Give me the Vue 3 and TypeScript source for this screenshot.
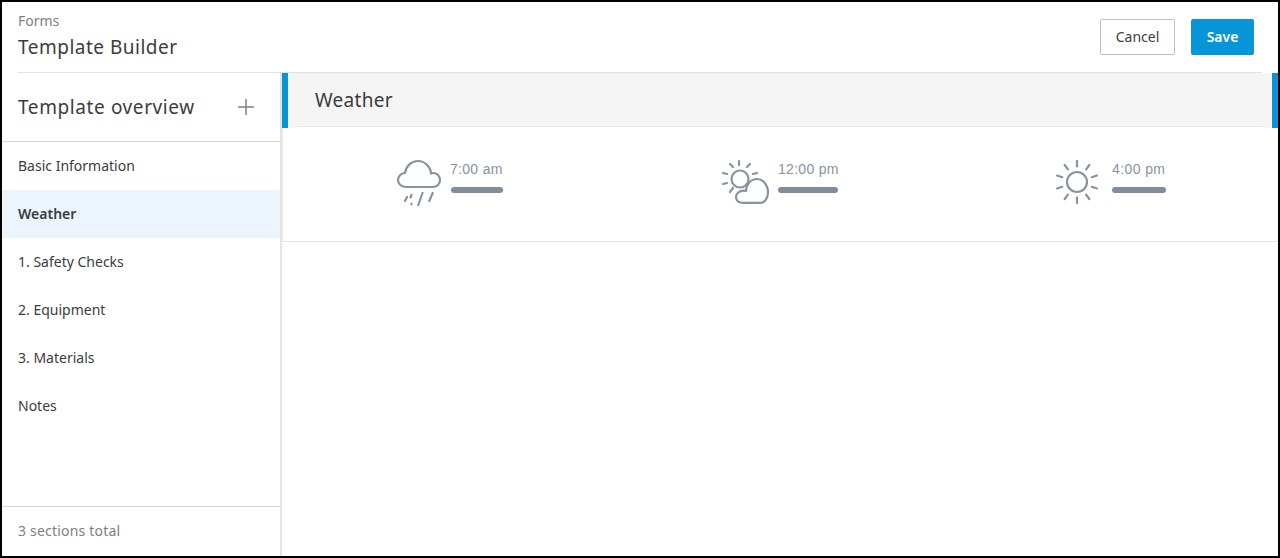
<script setup lang="ts">
const sections = [
  "Basic Information",
  "Weather",
  "1. Safety Checks",
  "2. Equipment",
  "3. Materials",
  "Notes",
];
const rays = [0, 36, 72, 108, 144, 180, 216, 252, 288, 324];
const drops = [
  "M404 201l2-4",
  "M410.500 195l-1 2.500",
  "M410.500 203.500v.8",
  "M421.500 193l-4.200 12",
  "M431.700 193l-3.400 8",
];
</script>

<template>
  <div class="page">
    <header class="top">
      <div class="titles">
        <div class="crumb">Forms</div>
        <div class="title">Template Builder</div>
      </div>
      <div class="actions">
        <button class="btn cancel">Cancel</button>
        <button class="btn save">Save</button>
      </div>
    </header>
    <div class="body">
      <aside class="side">
        <div class="side-head">
          <span class="side-title">Template overview</span>
          <svg class="plus" width="16" height="16" viewBox="0 0 16 16">
            <path d="M8 0v16M0 8h16" stroke="#808080" stroke-width="1.500" fill="none" />
          </svg>
        </div>
        <nav class="nav">
          <div
            v-for="s in sections"
            :key="s"
            class="nav-item"
            :class="{ active: s === 'Weather' }"
          >
            {{ s }}
          </div>
        </nav>
        <div class="side-foot">3 sections total</div>
      </aside>
      <main class="main">
        <div class="section-head">
          <div class="section-title">Weather</div>
        </div>
        <div class="weather">
          <div class="slot slot-a">
            <svg class="icon" width="48" height="50" viewBox="394 156 48 50" fill="none" stroke="#87939f" stroke-width="2.200" stroke-linecap="round" stroke-linejoin="round">
              <path d="M405 187h27c4 0 7-3 7-7s-3-7-6.500-7c-1 0-2 .2-2.500.5-.5-7-6.500-12.500-13-12.500s-12 5-13 12c-4 .3-7 3.500-7 7 0 4 3.500 7 8 7z" />
              <path v-for="d in drops" :key="d" :d="d" />
            </svg>
            <div class="reading">
              <div class="time">7:00 am</div>
              <div class="bar w52"></div>
            </div>
          </div>
          <div class="slot slot-b">
            <svg class="icon" width="48" height="46" viewBox="722 158 48 46" fill="none" stroke="#87939f" stroke-width="2.200" stroke-linecap="round" stroke-linejoin="round">
              <circle cx="740" cy="179" r="8.500" />
              <path d="M743 202.800h17c4.500 0 8-4 8-10.300 0-7.500-5-13.500-11-13.500-6 0-11 5.500-11 12-.8-.3-1.500-.4-2.400-.4-4.300 0-7.600 3-7.600 6.400 0 3.700 3 5.800 7 5.800z" fill="#fff" />
              <path d="M739 161v4M730 164l3 3M750 164l-3 3M723 173l4 1M757 173l-4 1M723 184l4-1M730 192l3-4" />
            </svg>
            <div class="reading">
              <div class="time">12:00 pm</div>
              <div class="bar w60"></div>
            </div>
          </div>
          <div class="slot slot-c">
            <svg class="icon" width="44" height="44" viewBox="-22 -22 44 44" fill="none" stroke="#87939f" stroke-width="2.200" stroke-linecap="round">
              <circle r="10" />
              <path v-for="r in rays" :key="r" d="M0 -21V-15.500" :transform="`rotate(${r})`" />
            </svg>
            <div class="reading">
              <div class="time">4:00 pm</div>
              <div class="bar w54"></div>
            </div>
          </div>
        </div>
      </main>
    </div>
  </div>
</template>

<style>
html,
body {
  margin: 0;
  background: #fff;
}
</style>

<style scoped>
.page {
  box-sizing: border-box;
  width: 1280px;
  height: 558px;
  border: 2px solid #000;
  display: flex;
  flex-direction: column;
  background: #fff;
  font-family: "Noto Sans", sans-serif;
  color: #3c3c3c;
  overflow: hidden;
}

.top {
  flex: none;
  height: 71px;
  margin: 0 16px;
  box-sizing: border-box;
  display: flex;
  justify-content: space-between;
  align-items: flex-start;
  border-bottom: 1px solid #e2e2e2;
}

.crumb {
  margin-top: 11px;
  font-size: 14px;
  line-height: 16px;
  color: #808080;
}

.title {
  margin-top: 5px;
  font-size: 19px;
  line-height: 26px;
  letter-spacing: 0.5px;
}

.actions {
  display: flex;
  gap: 16px;
  margin-top: 17px;
  margin-right: 8px;
}

.btn {
  box-sizing: border-box;
  height: 36px;
  border-radius: 2px;
  font-family: inherit;
  font-size: 14px;
  padding: 0 0 2px;
}

.cancel {
  width: 75px;
  background: #fff;
  border: 1px solid #bfbfbf;
  color: #3c3c3c;
}

.save {
  width: 63px;
  background: #0696d7;
  border: 0;
  color: #fff;
  font-weight: 600;
}

.body {
  flex: 1;
  display: flex;
  min-height: 0;
}

.side {
  flex: none;
  box-sizing: border-box;
  width: 280px;
  border-right: 2px solid #e4e4e4;
  display: flex;
  flex-direction: column;
}

.side-head {
  flex: none;
  height: 69px;
  box-sizing: border-box;
  padding: 0 24px 0 16px;
  display: flex;
  align-items: center;
  justify-content: space-between;
  border-bottom: 1px solid #d9d9d9;
}

.side-title {
  font-size: 19px;
  letter-spacing: 0.6px;
  color: #3c3c3c;
}

.plus {
  margin-right: 2px;
}

.nav {
  flex: 1;
}

.nav-item {
  box-sizing: border-box;
  height: 48px;
  padding: 0 0 2px 16px;
  display: flex;
  align-items: center;
  font-size: 14px;
  color: #3c3c3c;
}

.nav-item.active {
  background: #ebf5fb;
  font-weight: 600;
}

.side-foot {
  flex: none;
  box-sizing: border-box;
  height: 50px;
  padding: 0 0 2px 16px;
  display: flex;
  align-items: center;
  border-top: 1px solid #d9d9d9;
  font-size: 14px;
  letter-spacing: 0.2px;
  color: #808080;
}

.main {
  flex: 1;
  min-width: 0;
}

.section-head {
  height: 55px;
  box-sizing: border-box;
  background: #f5f5f5;
  border-left: 6px solid #0696d7;
  border-right: 6px solid #0696d7;
  padding: 0 10px;
}

.section-title {
  height: 54px;
  box-sizing: border-box;
  padding-left: 17px;
  display: flex;
  align-items: center;
  font-size: 19px;
  letter-spacing: 0.3px;
  color: #3c3c3c;
  border-bottom: 1px solid #e1e6ea;
  box-shadow: 0 2px 0 #fff;
}

.weather {
  height: 114px;
  box-sizing: border-box;
  border-bottom: 1px solid #e2e2e2;
  border-left: 1px solid #eee;
  display: grid;
  grid-template-columns: 328px 335px 1fr;
}

.slot {
  display: flex;
  align-items: flex-start;
  padding-top: 31px;
}

.slot-a {
  padding-left: 112px;
}

.slot-b {
  padding-left: 111px;
}

.slot-c {
  padding-left: 109px;
}

.icon {
  flex: none;
}

.slot-a .icon {
  margin-top: -3px;
}

.slot-b .icon {
  margin-top: -1px;
}

.slot-c .icon {
  margin-top: 1px;
}

.reading {
  margin-left: 8px;
}

.slot-c .reading {
  margin-left: 13px;
}

.time {
  font-family: "Liberation Sans", sans-serif;
  font-size: 14px;
  line-height: 20px;
  letter-spacing: 0.3px;
  margin-left: -1px;
  color: #87939f;
}

.slot-b .time {
  margin-left: 0;
}

.slot-c .time {
  margin-left: 0;
  letter-spacing: 0.4px;
}

.bar {
  height: 6px;
  border-radius: 3px;
  background: #808e9b;
  margin-top: 8px;
}

.w52 {
  width: 52px;
}

.w60 {
  width: 60px;
}

.w54 {
  width: 54px;
}
</style>
